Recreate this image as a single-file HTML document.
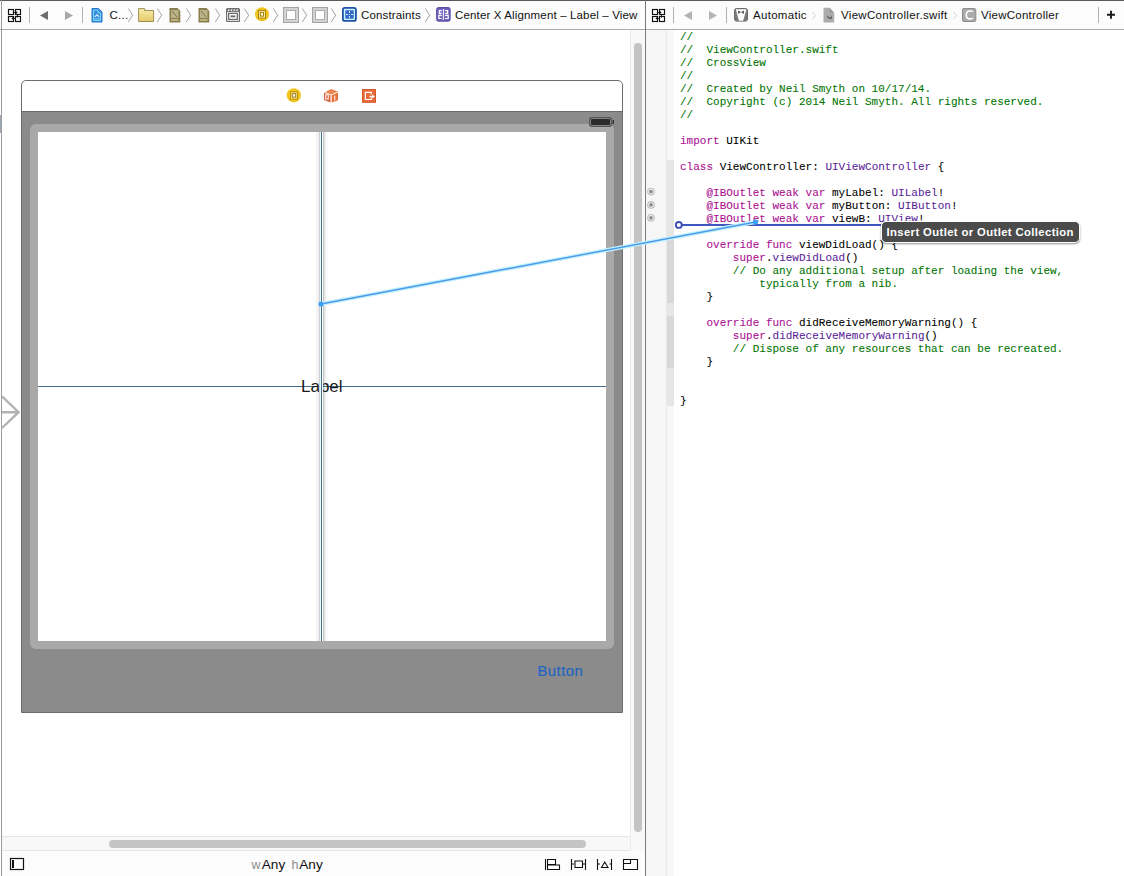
<!DOCTYPE html>
<html><head><meta charset="utf-8">
<style>
*{margin:0;padding:0;box-sizing:border-box}
html,body{width:1124px;height:876px;overflow:hidden;background:#fff;font-family:"Liberation Sans",sans-serif;position:relative}
.a{position:absolute}
.tb{position:absolute;top:7px;font-size:11.5px;letter-spacing:0.15px;line-height:16px;color:#111;white-space:nowrap}
pre{position:absolute;left:680.3px;top:29.8px;transform:scaleX(0.9574);transform-origin:0 0;font-family:"Liberation Mono",monospace;font-size:11.5px;line-height:13px;color:#000;white-space:pre;-webkit-text-stroke:0.08px currentColor}
.c{color:#007400}.k{color:#aa0d91}.t{color:#5c2699}.f{color:#2e0d6e}
</style></head><body>

<!-- backgrounds -->
<div class="a" style="left:0;top:0;width:1124px;height:1px;background:#5a5a5a"></div>
<div class="a" style="left:0;top:1px;width:1124px;height:28px;background:#fcfcfc"></div>
<div class="a" style="left:0;top:29px;width:1124px;height:1px;background:#a9a9a9"></div>

<!-- right panel gutter -->
<div class="a" style="left:646px;top:30px;width:21px;height:846px;background:#f6f6f6"></div>
<div class="a" style="left:666px;top:30px;width:1px;height:846px;background:#e9e9e9"></div>
<div class="a" style="left:667px;top:30px;width:7px;height:846px;background:#f8f8f8"></div>
<div class="a" style="left:667px;top:160px;width:7px;height:246px;background:#e6e6e6"></div>
<div class="a" style="left:667px;top:238px;width:7px;height:65px;background:#d8d8d8"></div>
<div class="a" style="left:667px;top:316px;width:7px;height:52px;background:#d8d8d8"></div>

<!-- left panel -->
<div class="a" style="left:1px;top:0;width:1px;height:876px;background:#9c9c9c"></div>
<div class="a" style="left:0;top:115px;width:1px;height:18px;background:#9ba7b5"></div>
<div class="a" style="left:645px;top:0;width:1px;height:876px;background:#7a7a7a"></div>

<!-- scrollbars -->
<div class="a" style="left:630px;top:30px;width:15px;height:821px;background:#f8f8f8;border-left:1px solid #ececec"></div>
<div class="a" style="left:634px;top:43px;width:8px;height:789px;background:#c4c4c4;border-radius:4px"></div>
<div class="a" style="left:2px;top:836px;width:628px;height:15px;background:#f8f8f8;border-top:1px solid #e6e6e6;border-bottom:1px solid #e6e6e6"></div>
<div class="a" style="left:109px;top:840px;width:477px;height:8px;background:#c4c4c4;border-radius:4px"></div>
<div class="a" style="left:2px;top:851px;width:643px;height:25px;background:#fcfcfc"></div>

<!-- scene -->
<div class="a" style="left:21px;top:80px;width:602px;height:633px;border:1px solid #6c6c6c;border-radius:5px 5px 0 0;background:#fff"></div>
<div class="a" style="left:22px;top:111px;width:600px;height:601px;background:#8b8b8b;border-top:1px solid #6a6a6a"></div>
<div class="a" style="left:30px;top:124px;width:584px;height:525px;background:#a9a9a9;border-radius:6px"></div>
<div class="a" style="left:38px;top:132px;width:568px;height:509px;background:#fff"></div>
<div class="a" style="left:38px;top:386px;width:568px;height:1px;background:#456b8f"></div>
<div class="a" style="left:301px;top:377px;font-size:17px;line-height:20px;color:#1a1a1a">Label</div>
<div class="a" style="left:316px;top:132px;width:12px;height:509px;background:linear-gradient(90deg,rgba(0,0,0,0.04) 0px,rgba(0,0,0,0.04) 1px,rgba(0,0,0,0.045) 1px,rgba(0,0,0,0.045) 2px,rgba(0,0,0,0.06) 2px,rgba(0,0,0,0.06) 3px,#cbcfd8 3px,#cbcfd8 4px,#e4ffff 4px,#e4ffff 5px,#4e6c8c 5px,#4e6c8c 6px,#ffffff 6px,#ffffff 7px,rgba(0,0,0,0.22) 7px,rgba(0,0,0,0.22) 8px,rgba(20,50,50,0.13) 8px,rgba(20,50,50,0.13) 9px,rgba(20,60,40,0.08) 9px,rgba(20,60,40,0.08) 10px,rgba(30,80,30,0.035) 10px,rgba(30,80,30,0.035) 11px,rgba(30,80,30,0.02) 11px,rgba(30,80,30,0.02) 12px)"></div>
<div class="a" style="left:537.5px;top:662.2px;font-size:14.8px;letter-spacing:0.5px;line-height:18px;color:#1d64c6;-webkit-text-stroke:0.15px #1d64c6">Button</div>

<svg class="a" style="left:0;top:0" width="1124" height="876" viewBox="0 0 1124 876">
  <!-- toolbar left -->
  <g fill="none" stroke="#111" stroke-width="1.15">
    <rect x="8.5" y="9.5" width="5" height="5"/><rect x="15.5" y="9.5" width="5" height="5"/>
    <rect x="8.5" y="16.5" width="5" height="5"/><rect x="15.5" y="16.5" width="5" height="5"/>
  </g>
  <path d="M13.7 12.5 H16.9 M17.4 14.7 V17.6 M12.3 18.4 H15" stroke="#111" stroke-width="0.9"/><circle cx="16.5" cy="12.5" r="0.9" fill="#111"/><circle cx="12.6" cy="18.4" r="0.9" fill="#111"/>
  <rect x="29" y="7" width="1" height="16" fill="#b2b2b2"/>
  <path d="M40 15.5 L48 11 L48 20 Z" fill="#6e6e6e"/>
  <path d="M73 15.5 L65 11 L65 20 Z" fill="#a8a8a8"/>
  <rect x="82" y="7" width="1" height="16" fill="#b2b2b2"/>
  <!-- blue doc -->
  <path d="M92 8.5 H98.5 L102 12 V22 H92 Z" fill="#3a8ee0" stroke="#2277cc" stroke-width="1"/>
  <path d="M93.5 10 H98 V12.8 H100.5 V20.5 H93.5 Z" fill="none" stroke="#8ce6ff" stroke-width="0.8"/>
  <path d="M94.5 16.5 L97 14 L99.5 16.5 L98.7 17.2 L97 15.6 L95.3 17.2 Z" fill="#e8f6ff"/>
  <path d="M94 19 H100" stroke="#8ce6ff" stroke-width="0.8"/>
  <!-- chevrons -->
  <g fill="none" stroke="#9a9a9a" stroke-width="0.9">
    <path d="M128.3 8.5 L132.7 15.2 L128.3 22"/>
    <path d="M157.3 8.5 L161.7 15.2 L157.3 22"/>
    <path d="M186.3 8.5 L190.7 15.2 L186.3 22"/>
    <path d="M215.3 8.5 L219.7 15.2 L215.3 22"/>
    <path d="M244.3 8.5 L248.7 15.2 L244.3 22"/>
    <path d="M273.3 8.5 L277.7 15.2 L273.3 22"/>
    <path d="M302.3 8.5 L306.7 15.2 L302.3 22"/>
    <path d="M331.3 8.5 L335.7 15.2 L331.3 22"/>
    <path d="M425.3 8.5 L429.7 15.2 L425.3 22"/>
  </g>
  <!-- folder -->
  <defs><linearGradient id="fg" x1="0" y1="0" x2="0" y2="1"><stop offset="0" stop-color="#f6eea8"/><stop offset="1" stop-color="#e6c96a"/></linearGradient></defs>
  <path d="M138.6 10.5 V8.6 H144.6 V10.5 H153.6 V21.5 H138.6 Z" fill="url(#fg)" stroke="#9e8f55" stroke-width="1"/>
  <!-- brown docs -->
  <g>
    <path d="M169.5 8 H177.5 L180.3 11 V22.5 H169.5 Z" fill="#8a7d4e"/>
    <rect x="171" y="10" width="7.5" height="8" fill="#b9b38a"/>
    <path d="M172 11 L177 17" stroke="#7a6a40" stroke-width="0.9"/>
    <rect x="171" y="19.3" width="7.5" height="1.3" fill="#d8cf9a"/>
    <path d="M198.5 8 H206.5 L209.3 11 V22.5 H198.5 Z" fill="#8a7d4e"/>
    <rect x="200" y="10" width="7.5" height="8" fill="#b9b38a"/>
    <path d="M201 11 L206 17" stroke="#7a6a40" stroke-width="0.9"/>
    <rect x="200" y="19.3" width="7.5" height="1.3" fill="#d8cf9a"/>
  </g>
  <!-- scene icon -->
  <rect x="226" y="8" width="14" height="14" rx="1.5" fill="#6c6c6c"/>
  <path d="M227.5 11 L228.5 9.3 H229.8 L228.8 11 Z M230.3 11 L231.3 9.3 H232.6 L231.6 11 Z M233.1 11 L234.1 9.3 H235.4 L234.4 11 Z M235.9 11 L236.9 9.3 H238.2 L237.2 11 Z" fill="#fff"/>
  <rect x="227.6" y="12.3" width="10.8" height="8.2" fill="none" stroke="#fff" stroke-width="0.8"/>
  <rect x="229.3" y="14" width="7.4" height="4.8" fill="#fff"/>
  <rect x="230.6" y="15.4" width="4.8" height="1.9" fill="#6c6c6c"/>
  <!-- yellow circle -->
  <circle cx="262" cy="14.2" r="7" fill="#f1c31d"/>
  <rect x="258.5" y="10.5" width="7" height="7.6" fill="#f7e49a" stroke="#a8840a" stroke-width="1"/>
  <rect x="260.5" y="12.5" width="3" height="3.6" fill="#fff8dc" stroke="#a8840a" stroke-width="1"/>
  <!-- gray squares -->
  <rect x="283.5" y="7.5" width="15" height="15" fill="#d3d3d3" stroke="#a3a3a3" stroke-width="1"/>
  <rect x="286.5" y="10.5" width="9" height="9" fill="#fff" stroke="#ababab" stroke-width="1"/>
  <rect x="312.5" y="7.5" width="15" height="15" fill="#d3d3d3" stroke="#a3a3a3" stroke-width="1"/>
  <rect x="315.5" y="10.5" width="9" height="9" fill="#fff" stroke="#ababab" stroke-width="1"/>
  <!-- constraints icon -->
  <rect x="342.9" y="7.9" width="13" height="13" rx="2" fill="#cdf4ff" stroke="#1d52a4" stroke-width="1.8"/>
  <rect x="345.3" y="10.3" width="8.4" height="8.4" fill="#2f68c8"/>
  <path d="M349.5 11 V12.8 M349.5 16 V17.8 M346 14.5 H347.8 M351.2 14.5 H353" stroke="#fff" stroke-width="0.9"/>
  <circle cx="349.5" cy="14.5" r="0.5" fill="#fff"/>
  <!-- purple alignment icon -->
  <rect x="436.8" y="7.8" width="13.2" height="13.2" rx="2.2" fill="#7667c2" stroke="#5d4fa6" stroke-width="1.4"/>
  <path d="M443.4 9 V20" stroke="#fff" stroke-width="1"/>
  <path d="M441.6 10.6 H439.3 V13.3 H441.6 M445.2 10.6 H447.6 V13.3 H445.2 M441.6 15.3 H438.8 V18.5 H441.6 M445.2 15.3 H448.2 V18.5 H445.2" fill="none" stroke="#fff" stroke-width="1.2"/>

  <!-- toolbar right -->
  <g fill="none" stroke="#111" stroke-width="1.15">
    <rect x="652.5" y="9.5" width="5" height="5"/><rect x="659.5" y="9.5" width="5" height="5"/>
    <rect x="652.5" y="16.5" width="5" height="5"/><rect x="659.5" y="16.5" width="5" height="5"/>
  </g>
  <path d="M657.7 12.5 H660.9 M661.4 14.7 V17.6 M656.3 18.4 H659" stroke="#111" stroke-width="0.9"/><circle cx="660.5" cy="12.5" r="0.9" fill="#111"/><circle cx="656.6" cy="18.4" r="0.9" fill="#111"/>
  <rect x="673" y="7" width="1" height="16" fill="#b2b2b2"/>
  <path d="M684 15.5 L692 11 L692 20 Z" fill="#b4b4b4"/>
  <path d="M717 15.5 L709 11 L709 20 Z" fill="#b4b4b4"/>
  <rect x="726" y="7" width="1" height="16" fill="#b2b2b2"/>
  <rect x="734.5" y="8.5" width="13" height="12.6" rx="2" fill="#7a7a7a" stroke="#6a6a6a" stroke-width="1"/>
  <path d="M735.8 9.3 H746.4 L743.2 20.8 H738.9 Z" fill="#fff"/>
  <path d="M738 10.4 L741 12 L744 10.4 V13.9 L741 12.3 L738 13.9 Z" fill="#5e5e5e"/>
  <path d="M812.5 12 L815.5 15.5 L812.5 19" fill="none" stroke="#d4d4d4"/>
  <path d="M823.5 7.7 H829.6 L834.2 12.8 V22.6 H823.5 Z" fill="#acacac"/>
  <path d="M829.6 7.7 V12.8 H834.2" fill="#9a9a9a"/>
  <path d="M827 17 Q829 19.5 832 18.8 Q832.5 16.5 830.5 15 Q831.5 17 830.5 17.5 Q829 17.3 827 15.5 Z" fill="#5e5e5e"/>
  <path d="M953.5 12 L956.5 15.5 L953.5 19" fill="none" stroke="#d4d4d4"/>
  <rect x="962.5" y="8.5" width="13.3" height="13" rx="1.5" fill="#ababab" stroke="#8c8c8c" stroke-width="1"/>
  <path d="M972.8 11.6 Q971.5 11 969.8 11 Q966.3 11 966.3 15 Q966.3 18.9 969.8 18.9 Q971.5 18.9 972.8 18.3" fill="none" stroke="#fff" stroke-width="1.6"/>
  <rect x="1098" y="7" width="1" height="16" fill="#b2b2b2"/>
  <path d="M1111 10.8 V18.8 M1107 14.8 H1115" stroke="#1a1a1a" stroke-width="1.9"/>

  <!-- scene top icons -->
  <circle cx="293.8" cy="95.3" r="7.1" fill="#f2c41c"/>
  <rect x="290.7" y="91.7" width="6.7" height="7.5" fill="#fde27a" stroke="#b38e06" stroke-width="1"/>
  <rect x="292.6" y="93.5" width="3" height="3.7" fill="#fffbe8" stroke="#a3823a" stroke-width="1"/>
  <path d="M325 92.2 L331 89 L338 91.6 L331.3 94.7 Z" fill="#eb8550"/>
  <path d="M324 92.6 L330.6 95.2 V102.6 L324 100 Z" fill="#d8603a"/>
  <path d="M331.6 95.2 L338 92.2 V100.2 L331.6 102.6 Z" fill="#e8703a"/>
  <path d="M324.4 92.4 L331.1 95.1 L337.8 92 M331.1 95.1 V102.6" fill="none" stroke="#fde8d8" stroke-width="0.9"/>
  <rect x="325.7" y="94.8" width="2.5" height="4.2" fill="none" stroke="#fff" stroke-width="1"/>
  <path d="M334.8 95.6 V100.3" stroke="#fff" stroke-width="1"/>
  <rect x="362.5" y="89.5" width="13" height="12.8" fill="#e96b38" stroke="#cf5a2e" stroke-width="1"/>
  <path d="M371.3 94.6 V92.3 H365.4 V99.5 H371.3 V97.5" fill="none" stroke="#fff" stroke-width="1.2"/>
  <path d="M369.5 96.5 H373.5" stroke="#fff" stroke-width="1.3"/>
  <path d="M372.3 94.6 L375 96.5 L372.3 98.4 Z" fill="#fff"/>
  <!-- battery -->
  <rect x="589.5" y="117.5" width="22" height="9" rx="2" fill="#2b2b2b" stroke="#555"/>
  <rect x="590.5" y="118.5" width="20" height="7" rx="1.5" fill="none" stroke="#999" stroke-width="0.8"/>
  <rect x="612.5" y="120" width="1.5" height="4" fill="#333"/>

  <!-- entry arrow -->
  <path d="M2 396.3 L18.6 412.2 L2 428 M2 412.2 H18" fill="none" stroke="#b3b3b3" stroke-width="2.4"/>

  <!-- gutter outlet circles -->
  <g fill="#f4f4f4" stroke="#bdbdbd" stroke-width="1.1">
    <circle cx="651" cy="191.6" r="3.3"/><circle cx="651" cy="204.9" r="3.3"/><circle cx="651" cy="217.8" r="3.3"/>
  </g>
  <g fill="#8c8c8c">
    <circle cx="651" cy="191.6" r="1.9"/><circle cx="651" cy="204.9" r="1.9"/><circle cx="651" cy="217.8" r="1.9"/>
  </g>

  <!-- bottom bar icons -->
  <rect x="10.5" y="858.5" width="13" height="11" fill="none" stroke="#111" stroke-width="1.2"/>
  <rect x="12" y="860" width="2" height="8" fill="#111"/>
  <g fill="none" stroke="#111" stroke-width="1.1">
    <path d="M545.5 859 V870 M547.5 859.5 H555.5 V864.5 H547.5 Z M547.5 865 H559.5 V869.5 H547.5 Z"/>
    <path d="M571.5 859 V870 M571.5 864 H574 M575 861 H582.5 V867.5 H575 Z M583 864 H585.5 M585.5 859 V870"/>
    <path d="M597.5 859 V870 M597.5 864 H600 M601.5 867.5 L604.7 862 L608 867.5 Z M609.5 864 H611.5 M611.5 859 V870"/>
    <path d="M623.5 859.5 H637.5 V869.5 H623.5 Z M623.5 863.5 H630.5 V859.5"/>
  </g>

</svg>

<!-- toolbar texts -->
<div class="tb" style="left:109.5px;letter-spacing:0">C<span style="letter-spacing:0.2px;margin-left:0.3px">...</span></div>
<div class="tb" style="left:361px">Constraints</div>
<div class="tb" style="left:455px">Center X Alignment – Label – View</div>
<div class="tb" style="left:753px;letter-spacing:0.3px">Automatic</div>
<div class="tb" style="left:841px;letter-spacing:0.32px">ViewController.swift</div>
<div class="tb" style="left:981px;letter-spacing:0.25px">ViewController</div>

<!-- bottom -->
<div class="a" style="left:251.5px;top:857px;font-size:12.5px;line-height:16px;color:#8c8c8c">w</div>
<div class="a" style="left:261.8px;top:857px;font-size:13.6px;line-height:16px;color:#111">Any</div>
<div class="a" style="left:291.5px;top:857px;font-size:12.5px;line-height:16px;color:#8c8c8c">h</div>
<div class="a" style="left:299.3px;top:857px;font-size:13.6px;line-height:16px;color:#111">Any</div>

<!-- code -->
<pre><span class="c">//
//  ViewController.swift
//  CrossView
//
//  Created by Neil Smyth on 10/17/14.
//  Copyright (c) 2014 Neil Smyth. All rights reserved.
//</span>

<span class="k">import</span> UIKit

<span class="k">class</span> ViewController: <span class="t">UIViewController</span> {

    <span class="k">@IBOutlet weak var</span> myLabel: <span class="t">UILabel</span>!
    <span class="k">@IBOutlet weak var</span> myButton: <span class="t">UIButton</span>!
    <span class="k">@IBOutlet weak var</span> viewB: <span class="t">UIView</span>!

    <span class="k">override func</span> viewDidLoad() {
        <span class="k">super</span>.<span class="t">viewDidLoad</span>()
        <span class="c">// Do any additional setup after loading the view,
            typically from a nib.</span>
    }

    <span class="k">override func</span> didReceiveMemoryWarning() {
        <span class="k">super</span>.<span class="t">didReceiveMemoryWarning</span>()
        <span class="c">// Dispose of any resources that can be recreated.</span>
    }


}</pre>

<svg class="a" style="left:0;top:0" width="1124" height="876" viewBox="0 0 1124 876">
  <!-- connection -->
  <path d="M679 225 H881" stroke="#3e56c0" stroke-width="2"/>
  <circle cx="678.8" cy="224.9" r="2.95" fill="#fff" stroke="#4150b4" stroke-width="1.9"/>
  <path d="M321 304 L755.5 222" stroke="#c2f0ff" stroke-width="4" stroke-linecap="round"/>
  <path d="M321 304 L755.5 222" stroke="#4b9ae6" stroke-width="1.4" stroke-linecap="round"/>
  <circle cx="321" cy="304" r="2.6" fill="#3ea0f4"/>
  <circle cx="755.5" cy="222" r="2.6" fill="#3ea0f4"/>
</svg>

<!-- tooltip -->
<div class="a" style="left:880.5px;top:220.8px;width:199px;height:22px;border:1.3px solid #fff;border-radius:5px;box-shadow:0 1px 2px rgba(0,0,0,.45);background:#4b4b4b"></div>
<div class="a" style="left:886.5px;top:223.7px;font-size:11.3px;letter-spacing:0.38px;line-height:16px;font-weight:bold;color:#fff;white-space:nowrap">Insert Outlet or Outlet Collection</div>

</body></html>
